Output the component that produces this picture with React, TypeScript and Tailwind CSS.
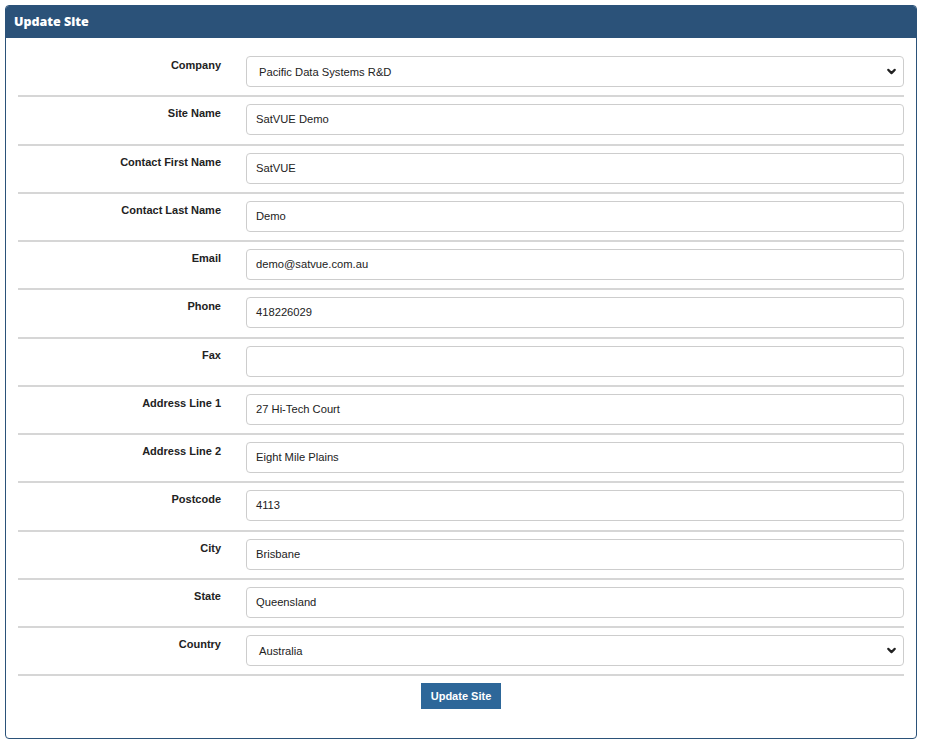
import { ChevronDown } from "lucide-react"

type Field = {
  readonly label: string
  readonly value: string
  readonly select?: boolean
}

const fields: readonly Field[] = [
  { label: "Company", value: "Pacific Data Systems R&D", select: true },
  { label: "Site Name", value: "SatVUE Demo" },
  { label: "Contact First Name", value: "SatVUE" },
  { label: "Contact Last Name", value: "Demo" },
  { label: "Email", value: "demo@satvue.com.au" },
  { label: "Phone", value: "418226029" },
  { label: "Fax", value: "" },
  { label: "Address Line 1", value: "27 Hi-Tech Court" },
  { label: "Address Line 2", value: "Eight Mile Plains" },
  { label: "Postcode", value: "4113" },
  { label: "City", value: "Brisbane" },
  { label: "State", value: "Queensland" },
  { label: "Country", value: "Australia", select: true },
]

const FieldRow = ({ field, first }: { readonly field: Field; readonly first: boolean }) => (
  <div className={`flex border-b-2 border-[#d6d6d6] pb-[8.25px] ${first ? "pt-[8px]" : "pt-[7px]"}`}>
    <label className="w-[203px] shrink-0 pt-[1px] text-right text-[11px] font-bold text-[#222]">
      {field.label}
    </label>
    <div className="ml-[25px] flex h-[31px] flex-1 items-center justify-between rounded-[4px] border border-[#cdcdcd] bg-white pr-[5px] text-[11.2px] text-[#222]">
      <span className={field.select ? "pl-[12px] pt-[2px]" : "pl-[9px]"}>{field.value}</span>
      {field.select && <ChevronDown size={13} strokeWidth={4} className="text-[#222]" />}
    </div>
  </div>
)

export default function App() {
  return (
    <div className="min-h-screen bg-white pl-[5px] pt-[5px] font-[family-name:Liberation_Sans,Arial,sans-serif]">
      <div className="w-[912px] overflow-hidden rounded-[4px] border border-[#2b5279]">
        <div className="flex h-[32px] items-center bg-[#2b5279] px-[8px] font-[family-name:Open_Sans,sans-serif] text-[12.5px] font-extrabold text-white">
          Update Site
        </div>
        <div className="px-[12px] pt-[10px] pb-[29px]">
          {fields.map((field, i) => (
            <FieldRow key={field.label} field={field} first={i === 0} />
          ))}
          <div className="flex justify-center pt-[7px]">
            <button
              type="button"
              className="h-[26px] w-[80px] bg-[#2d6799] text-[11px] font-bold text-white"
            >
              Update Site
            </button>
          </div>
        </div>
      </div>
    </div>
  )
}
